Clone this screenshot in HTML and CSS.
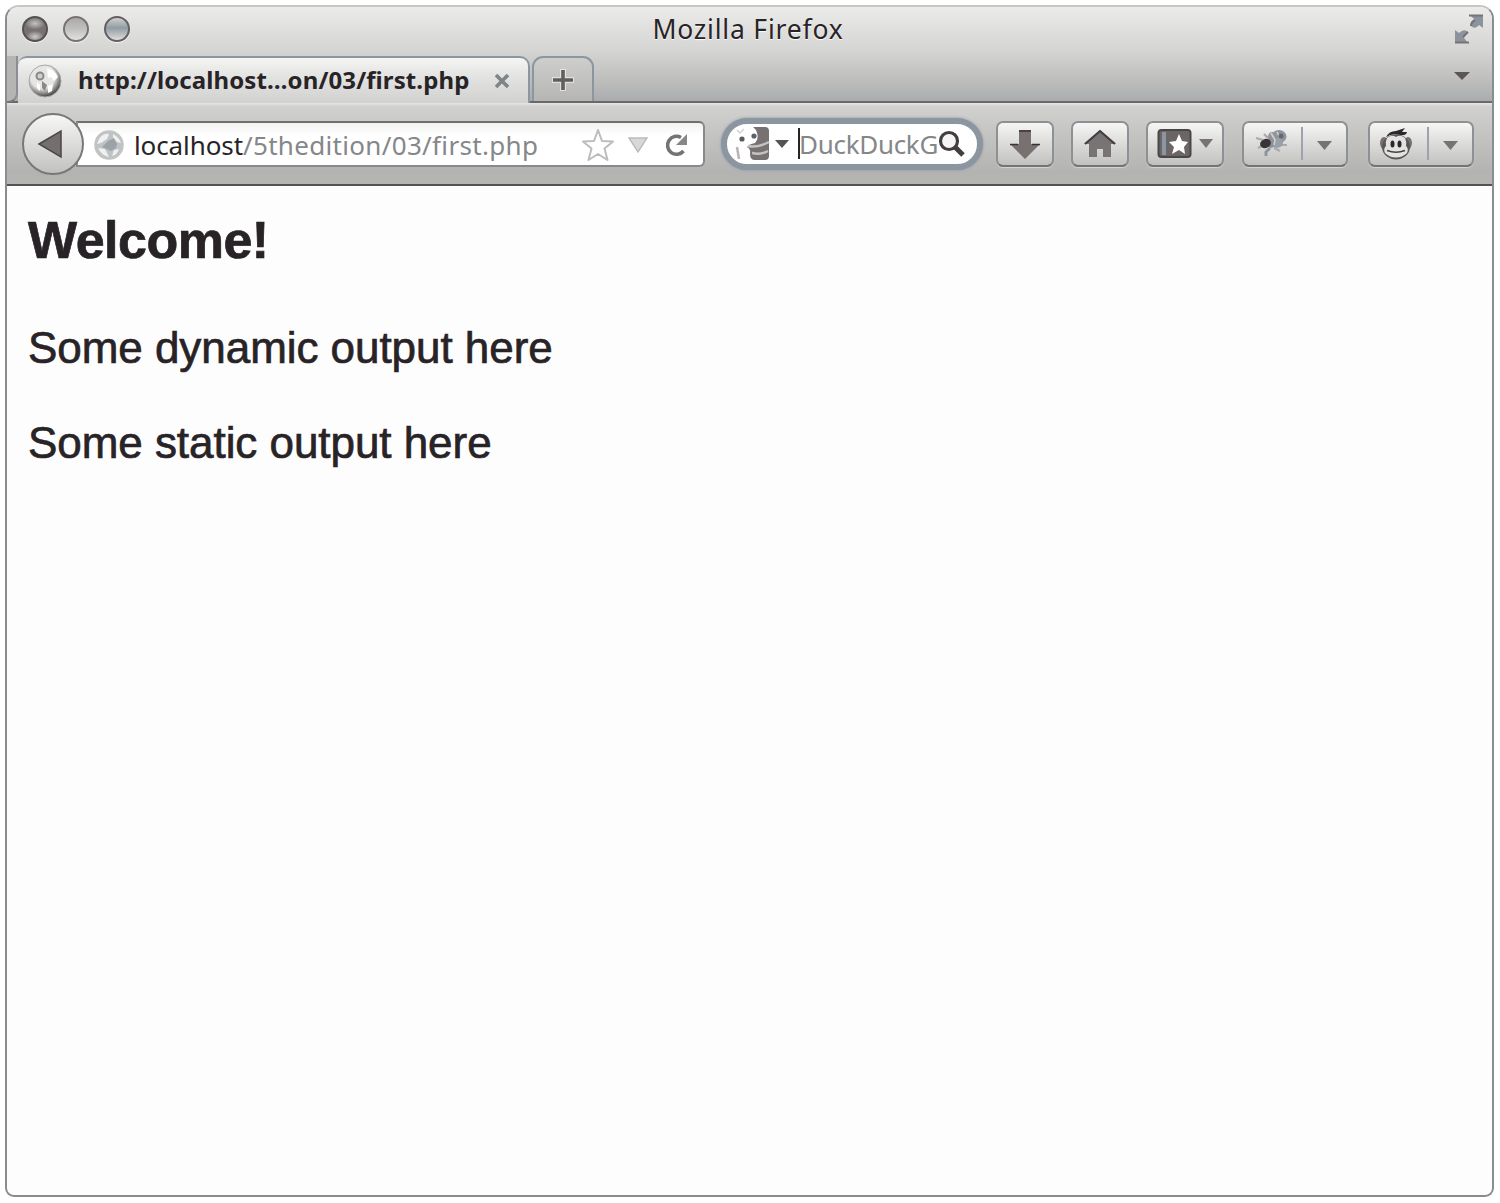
FILE: index.html
```html
<!DOCTYPE html>
<html lang="en">
<head>
<meta charset="utf-8">
<title>Mozilla Firefox</title>
<link rel="stylesheet" href="styles.css">
</head>
<body>
<div class="window">
  <header class="chrome">
    <div class="titlebar">
      <div class="lights"><span class="light light-close"></span><span class="light light-min"></span><span class="light light-zoom"></span></div>
      <div class="title">Mozilla Firefox</div>
      <svg class="fullscreen" width="32" height="32" viewBox="0 0 32 32"><g fill="#8b949e"><path d="M17 2H30V15L26 12Q22 17 18 13Q18 9 22 7Z"/><path d="M2 17L6 20Q11 15 15 19Q12 22 11 25L15 30H2Z"/></g><path d="M16 2.500H30M2 29.500H16M18 13Q18 9 22 7M15 19Q12 22 10 24" fill="none" stroke="#777273" stroke-width="2"/></svg>
    </div>
    <div class="tabs">
      <div class="edge"></div>
      <div class="tab">
        <svg class="tab-globe" width="34" height="34" viewBox="0 0 34 34"><defs><radialGradient id="g1" cx=".42" cy=".36" r=".68"><stop offset=".55" stop-color="#e6e6e5"/><stop offset="1" stop-color="#2f2a2b"/></radialGradient></defs><circle cx="17" cy="17" r="16" fill="url(#g1)" stroke="#a5a8aa"/><circle cx="12" cy="12" r="3.500" fill="#d0d0cf" stroke="#8b8887" stroke-width="2"/><path d="M14 17L19 21L17 27L14 24Z" fill="#8b8887"/><path d="M19 4Q27 6 30 13L26 17L23 13L20 14ZM20 22L25 20L24 27L20 29ZM9 18L12 21V27L9 24Z" fill="#fff"/></svg>
        <span class="tab-label">http://localhost…on/03/first.php</span>
        <svg class="tab-close" width="16" height="16" viewBox="0 0 16 16"><path d="M2 2L14 14M14 2L2 14" stroke="#7f8489" stroke-width="3.600"/></svg>
      </div>
      <div class="newtab"><svg width="22" height="22" viewBox="0 0 22 22"><path d="M11 0V22M0 11H22" stroke="#fff" stroke-opacity=".5" stroke-width="6"/><path d="M11 1V21M1 11H21" stroke="#625d5e" stroke-width="3.600"/></svg></div>
      <svg class="tabs-menu" width="16" height="10" viewBox="0 0 16 10"><path d="M0 1H16L8 9Z" fill="#5b5556"/></svg>
    </div>
  </header>

  <nav class="toolbar">
    <div class="back"><svg width="28" height="30" viewBox="0 0 28 30"><path d="M2 15L24 2V28Z" fill="#746e6f" stroke="#4b4647" stroke-width="1.500"/></svg></div>
    <div class="urlbar">
      <svg class="site" width="30" height="30" viewBox="0 0 30 30"><circle cx="15" cy="15" r="14" fill="#c0c3c6" stroke="#c3c3c2" stroke-width="1.500"/><path d="M5 9Q9 3 15 4L13 9L7 13L3 14ZM19 4Q25 7 27 13L23 12L19 8ZM4 18L11 19L15 27Q8 26 4 18ZM20 20L25 19Q23 25 18 26Z" fill="#f0f0ef"/><path d="M14 11L20 8L23 14L22 18L17 21L8 17Z" fill="#9da2a8"/></svg>
      <span class="url"><b>localhost</b>/5thedition/03/first.php</span>
      <svg class="star" width="34" height="34" viewBox="0 0 34 34"><path d="M17 2L21 13L32 13.500L23.500 20.500L26.500 32L17 26L7.500 32L10.500 20.500L2 13.500L13 13Z" fill="#fff" stroke="#bcbcbb" stroke-width="2" stroke-linejoin="round"/></svg>
      <svg class="drop" width="20" height="16" viewBox="0 0 20 16"><path d="M1 1H19L10 15Z" fill="#d8d8d7" stroke="#bbb" stroke-width="1.400"/></svg>
      <svg class="reload" width="26" height="26" viewBox="0 0 26 26"><path d="M18 5.500A9 9 0 1 0 20.500 19" fill="none" stroke="#777273" stroke-width="3.600"/><path d="M24 2V13H13Z" fill="#858789"/></svg>
    </div>
    <div class="search">
      <svg class="engine" width="36" height="36" viewBox="0 0 36 36"><path d="M18 1H30Q34 1 34 5V30Q34 34 30 34H20Q15 34 15 28Q16 23 12 21Q14 18 20 17Q24 13 22 7Q21 3 18 1Z" fill="#777172"/><path d="M13 20Q23 22 34 16M17 27Q26 29 33 25" fill="none" stroke="#c3c3c2" stroke-width="2.500"/><circle cx="7" cy="13" r="2.600" fill="#5c5759"/><circle cx="19" cy="10" r="2.600" fill="#5c6269"/><path d="M2 4L5 7L9 3" fill="none" stroke="#d5d3d2" stroke-width="1.500"/><path d="M2 21L4 33" stroke="#b9b5b4" stroke-width="2.500"/></svg>
      <svg class="engine-drop" width="14" height="8" viewBox="0 0 14 8"><path d="M0 0H14L7 8Z" fill="#575253"/></svg>
      <span class="caret"></span>
      <span class="query">DuckDuckG</span>
      <svg class="lens" width="28" height="28" viewBox="0 0 28 28"><circle cx="11" cy="11" r="8.500" fill="#f5f5f5" stroke="#423d3f" stroke-width="3.200"/><path d="M17 17L25 25" stroke="#423d3f" stroke-width="5"/></svg>
    </div>
    <div class="btn btn-download"><svg width="32" height="32" viewBox="0 0 32 32"><path d="M10 2H22V16H31L16 31L1 16H10Z" fill="#787170"/><path d="M10 3H22M1 16.500H9M23 16.500H31" stroke="#38333a" stroke-width="1.600"/></svg></div>
    <div class="btn btn-home"><svg width="34" height="30" viewBox="0 0 34 30"><path d="M17 1L33 15H28V28H20V20H14V28H6V15H1Z" fill="#787374"/><path d="M2 15L17 2L32 15" fill="none" stroke="#423d3f" stroke-width="2"/></svg></div>
    <div class="btn btn-bookmarks"><svg width="36" height="32" viewBox="0 0 36 32"><rect x="1.500" y="2" width="32" height="27" rx="3" fill="#6b6566" stroke="#4b4647" stroke-width="2"/><path d="M5 4H9V27H5Z" fill="#8c96a0"/><path d="M22 6L25 13L31 14L27 19L28 26L22 22L15 26L17 19L12 14L19 13Z" fill="#fff"/></svg><svg class="arrow" width="14" height="9" viewBox="0 0 14 9"><path d="M0 0H14L7 9Z" fill="#777273"/></svg></div>
    <div class="btn btn-bug"><svg width="34" height="30" viewBox="0 0 34 30"><g stroke="#a5abb0" stroke-width="2.200" fill="none"><path d="M8 11L1 9M7 17L3 19M22 16L32 16M19 19L25 22M9 5L13 9"/><path d="M15 19L11 23V27" stroke="#8c96a0" stroke-width="3"/></g><ellipse cx="24" cy="7.500" rx="7.500" ry="6.500" fill="#8c96a0"/><ellipse cx="22" cy="14" rx="6" ry="5" fill="#98a0a8"/><ellipse cx="17" cy="8" rx="4" ry="5" fill="#939598"/><ellipse cx="16" cy="14" rx="4" ry="5" fill="#8c9195"/><path d="M16 4L20 11L19 16M22 3L25 9" fill="none" stroke="#cfcfce" stroke-width="1.600"/><ellipse cx="10.500" cy="14.500" rx="5.500" ry="4.500" transform="rotate(-25 10.500 14.500)" fill="#3a3437"/><circle cx="26" cy="7" r="2.500" fill="#6b6667"/></svg><span class="divider"></span><svg class="arrow" width="15" height="9" viewBox="0 0 15 9"><path d="M0 0H15L7.500 9Z" fill="#777273"/></svg></div>
    <div class="btn btn-monkey"><svg width="34" height="34" viewBox="0 0 34 34"><ellipse cx="5" cy="16" rx="4" ry="6" fill="#777172"/><ellipse cx="29" cy="16" rx="4" ry="6" fill="#777172"/><ellipse cx="17" cy="20" rx="14" ry="12.500" fill="#5c5657"/><path d="M8 11Q13 7 17 10Q21 7 26 11Q28 15 27 19Q30 22 28 26Q23 30.500 17 30.500Q11 30.500 6 26Q4 22 7 19Q6 15 8 11Z" fill="#e3e3e2"/><path d="M7 10Q10 4 17 4L26 1L23 5L28 5Q27 9 21 8Q13 6 7 10Z" fill="#2c272a"/><ellipse cx="13.500" cy="17" rx="2" ry="3.500" fill="#2c272a"/><ellipse cx="20.500" cy="17" rx="2" ry="3.500" fill="#2c272a"/><path d="M8 23.500Q17 27 26 23.500" fill="none" stroke="#47413f" stroke-width="1.600"/></svg><span class="divider"></span><svg class="arrow" width="15" height="9" viewBox="0 0 15 9"><path d="M0 0H15L7.500 9Z" fill="#777273"/></svg></div>
  </nav>

  <main class="page">
    <h1>Welcome!</h1>
    <p>Some dynamic output here</p>
    <p>Some static output here</p>
  </main>
</div>
</body>
</html>
```
FILE: styles.css
```css
* { box-sizing: border-box; }
body { margin: 0; padding: 5px; background: #fff; }
svg { display: block; flex: none; }
.window {
  width: 1489px; height: 1192px; display: flex; flex-direction: column;
  border: 2px solid #898d91; border-top-color: #c6c6c5; border-radius: 14px 14px 9px 9px;
  background: #fdfdfd; overflow: hidden;
  font-family: "Noto Sans", "Open Sans", sans-serif; color: #282326;
}
.chrome { height: 94px; flex: none; background: linear-gradient(#ebebea, #d5d5d4 45%, #bcbcbb 80%, #a9acae); }
.titlebar { height: 49px; display: grid; grid-template-columns: 200px 1fr 200px; align-items: center; }
.lights { display: flex; gap: 15px; padding-left: 15px; margin-top: -5px; }
.light { width: 26px; height: 26px; border: 2px solid #777172; border-radius: 50%; box-shadow: 0 1px 1px #f3f3f3; }
.light-close { border-color: #565052; background: radial-gradient(ellipse 9px 6px at 50% 85%, #ccc, transparent), radial-gradient(ellipse 10px 6px at 50% 25%, #c4c4c3, #777172); }
.light-min { background: linear-gradient(#aaa9a8, #c0c0bf 50%, #e1e1e0); }
.light-zoom { border-color: #655f61; background: linear-gradient(#d0d0cf, #929ba3 45%, #dededd); }
.title { text-align: center; font-size: 26.500px; line-height: 36px; letter-spacing: .8px; margin: -5px 3px 0 0; text-shadow: 0 1px 1px #fff; }
.fullscreen { justify-self: end; margin: -6px 7px 0 0; }
.tabs { height: 45px; display: flex; }
.edge { width: 11px; height: 47px; flex: none; border-right: 2px solid #8b8f93; border-bottom: 2px solid #777273; border-radius: 0 0 10px 0; background: #b5b5b4; position: relative; }
.tab {
  width: 512px; height: 47px; flex: none; position: relative; display: flex; align-items: center;
  border: 2px solid #8c96a0; border-bottom: 0; border-left: 0; border-radius: 9px 10px 0 0; padding-left: 10px;
  background: linear-gradient(#f5f5f4, #e5e5e4 35%, #d1d1d0);
}
.tab-label { font-size: 24px; font-weight: 700; line-height: 34px; letter-spacing: .1px; white-space: nowrap; width: 432px; padding-left: 16px; margin-top: -1px; }
.newtab { width: 62px; flex: none; margin-left: 2px; display: flex; align-items: center; justify-content: center; border: 2px solid #8c96a0; border-bottom: 0; border-radius: 11px 11px 0 0; background: linear-gradient(#cececd, #b5b5b4); padding-top: 1px; }
.tabs-menu { margin: 15px 22px 0 auto; }
.toolbar {
  height: 85px; flex: none; display: flex; align-items: center; padding-left: 15px;
  border-top: 2px solid #6c6768; border-bottom: 2px solid #575153;
  background: linear-gradient(#e6e6e5, #d1d1d0 4%, #c7c7c6 30%, #b3b3b2 85%, #b5b5b4);
}
.back { width: 62px; height: 62px; flex: none; border: 2px solid #777879; border-radius: 50%; background: linear-gradient(#f7f7f6, #c1c1c0); display: flex; align-items: center; justify-content: center; padding-right: 4px; position: relative; }
.urlbar { width: 629px; height: 46px; flex: none; margin-left: -8px; border: 2px solid #868a8e; border-top-color: #716d70; border-radius: 0 6px 6px 0; background: linear-gradient(#f2f2f1, #fff 30%); display: flex; align-items: center; padding: 2px 0 0 16px; }
.url { width: 457px; padding-left: 10px; font-size: 26px; line-height: 36px; letter-spacing: .32px; color: #858789; white-space: nowrap; }
.url b { font-weight: 400; letter-spacing: -.1px; color: #282326; }
.drop { margin-left: 13px; }
.reload { margin-left: 15px; }
.search { width: 262px; height: 52px; flex: none; margin-left: 16px; border: 6px solid #8c96a0; border-radius: 26px; background: #fff; box-shadow: 0 0 3px #8c96a0; display: flex; align-items: center; padding-left: 8px; }
.engine-drop { margin-left: 4px; }
.caret { width: 2px; height: 31px; flex: none; background: #282326; margin-left: 9px; }
.query { width: 138px; flex: none; font-size: 26px; line-height: 36px; letter-spacing: -.3px; text-indent: -1px; color: #858789; white-space: nowrap; }
.btn { height: 46px; flex: none; display: flex; align-items: center; justify-content: center; border: 2px solid #8c9196; border-bottom-color: #777273; border-radius: 7px; background: linear-gradient(#f6f6f5, #dbdbda 50%, #c1c1c0); box-shadow: 0 1px 1px #d6d6d5; }
.btn-download { width: 58px; margin-left: 13px; }
.btn-home { width: 58px; margin-left: 17px; }
.btn-bookmarks { width: 78px; margin-left: 17px; gap: 6px; }
.btn-bug { width: 106px; margin-left: 18px; justify-content: flex-start; padding-left: 11px; }
.btn-monkey { width: 106px; margin-left: 20px; justify-content: flex-start; padding-left: 9px; }
.divider { width: 2px; height: 33px; background: #9da3a8; margin: 0 14px 0 12px; }
.btn-monkey .divider { margin-left: 14px; }
.btn-bug .arrow, .btn-monkey .arrow { margin-top: 3px; }
.page { padding: 22px 22px 0 21px; font-family: "Liberation Sans", Arial, sans-serif; -webkit-text-stroke: .7px #282326; }
h1 { margin: 0; font-size: 52px; line-height: 64px; font-weight: 700; letter-spacing: -.5px; }
p { margin: 0; font-size: 44px; line-height: 52px; letter-spacing: -.05px; }
h1 + p { margin-top: 50px; }
p + p { margin-top: 43px; }
```
